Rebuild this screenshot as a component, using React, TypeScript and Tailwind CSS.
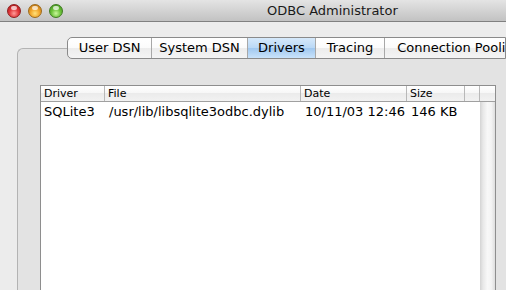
import React from 'react';

const tabs = [
  { label: 'User DSN', w: 'w-[83px]' },
  { label: 'System DSN', w: 'w-[96px]' },
  { label: 'Drivers', w: 'w-[68px]', active: true },
  { label: 'Tracing', w: 'w-[69px]' },
  { label: 'Connection Pooling', w: 'w-[150px]' },
];

const cols = [
  { label: 'Driver', w: 'w-[64px]' },
  { label: 'File', w: 'w-[196px]' },
  { label: 'Date', w: 'w-[106px]' },
  { label: 'Size', w: 'w-[58px]' },
  { label: '', w: 'w-[15px]' },
];

const rows = [
  ['SQLite3', '/usr/lib/libsqlite3odbc.dylib', '10/11/03 12:46', '146 KB'],
];

function Light({ color }: { color: 'red' | 'yellow' | 'green' }) {
  const bg = {
    red: 'bg-[radial-gradient(circle_at_50%_70%,#ff9d9a_0%,#e2373a_45%,#a31416_100%)] border-[#8e1f1f]',
    yellow: 'bg-[radial-gradient(circle_at_50%_70%,#ffe17a_0%,#f1a52a_45%,#b06a10_100%)] border-[#9c6a1b]',
    green: 'bg-[radial-gradient(circle_at_50%_70%,#c9f79a_0%,#6cc23a_45%,#3b8a18_100%)] border-[#3f7a22]',
  }[color];
  return (
    <div className={`relative w-[14px] h-[14px] rounded-full border ${bg}`}>
      <div className="absolute left-[3px] top-[1px] w-[6px] h-[4px] rounded-full bg-white/70" />
    </div>
  );
}

export default function App() {
  return (
    <div className="w-[506px] h-[290px] overflow-hidden bg-[#ececec] flex flex-col font-['DejaVu_Sans',sans-serif] text-black">
      {/* Title bar */}
      <div className="h-[22px] shrink-0 flex items-center bg-[linear-gradient(#e4e4e4,#c2c2c2)] border-b border-[#808080]">
        <div className="flex items-center gap-[7px] pl-[7px]">
          <Light color="red" />
          <Light color="yellow" />
          <Light color="green" />
        </div>
        <span className="ml-[204px] text-[13px] text-[#1a1a1a]">ODBC Administrator</span>
      </div>

      {/* Body */}
      <div className="flex-1 flex flex-col pl-[17px] pt-[15px] min-h-0">
        <div className="relative z-10 ml-[50px] flex h-[22px] shrink-0 border border-[#8a8a8a] rounded-l-[5px] overflow-hidden bg-[linear-gradient(#ffffff,#fbfbfb_50%,#ececec_50%,#f4f4f4)] text-[13px]">
          {tabs.map((t, i) => (
            <div
              key={t.label}
              className={`${t.w} shrink-0 flex items-center justify-center whitespace-nowrap ${i > 0 ? 'border-l border-[#a8a8a8]' : ''} ${t.active ? 'bg-[linear-gradient(#d6e9fb,#b9d8f6_50%,#9fc7ef_50%,#c9e3fb)]' : ''}`}
            >
              {t.label}
            </div>
          ))}
        </div>

        <div className="-mt-[11px] flex-1 border-l border-t border-[#b3b3b3] rounded-tl-[6px] bg-[#e3e3e3] pl-[22px] pt-[36px]">
          <div className="w-[456px] h-[300px] border border-[#8e8e8e] bg-white flex flex-col">
            {/* header */}
            <div className="h-[16px] shrink-0 flex border-b border-[#a0a0a0] bg-[linear-gradient(#ffffff,#f6f6f6_50%,#ebebeb_50%,#f2f2f2)] text-[11px] leading-[15px]">
              {cols.map((c) => (
                <div key={c.label || 'x'} className={`${c.w} shrink-0 border-r border-[#b8b8b8] pl-[3px]`}>
                  {c.label}
                </div>
              ))}
              <div className="flex-1" />
            </div>
            {/* body */}
            <div className="flex-1 flex">
              <div className="w-[439px] shrink-0">
                {rows.map((r) => (
                  <div key={r[0]} className="flex h-[20px] items-center text-[13px]">
                    <div className="w-[64px] pl-[3px]">{r[0]}</div>
                    <div className="w-[196px] pl-[4px] whitespace-nowrap">{r[1]}</div>
                    <div className="w-[106px] pl-[4px] whitespace-nowrap">{r[2]}</div>
                    <div className="w-[58px] pl-[4px] whitespace-nowrap">{r[3]}</div>
                  </div>
                ))}
              </div>
              <div className="flex-1 bg-[linear-gradient(90deg,#d4d4d4,#e8e8e8_20%,#f8f8f8_50%,#f4f4f4_75%,#dedede)]" />
            </div>
          </div>
        </div>
      </div>
    </div>
  );
}
